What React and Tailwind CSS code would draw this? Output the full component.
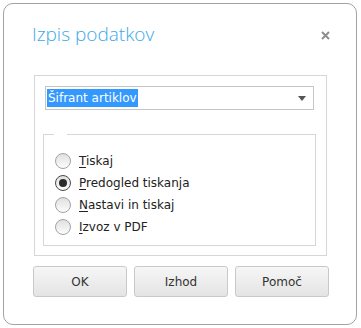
import React from "react";

function Radio({ label, checked }) {
  const first = label[0];
  const rest = label.slice(1);
  return (
    <div className="flex h-[22px] items-center">
      <div
        className={
          "flex h-[16px] w-[16px] items-center justify-center rounded-full border bg-gradient-to-b from-[#e0e0e0] to-[#fcfcfc] " +
          (checked ? "border-[#4a4a4a]" : "border-[#a3a3a3]")
        }
      >
        {checked && <div className="h-[8px] w-[8px] rounded-full bg-[#2b2b2b]" />}
      </div>
      <span className="ml-[8px] text-[12px] leading-none text-[#222]">
        <span className="underline underline-offset-2">{first}</span>
        {rest}
      </span>
    </div>
  );
}

function Btn({ children }) {
  return (
    <div className="flex h-[31px] w-[94px] items-center justify-center rounded-[3px] border border-[#c9c9c9] bg-gradient-to-b from-[#f6f6f6] to-[#e4e4e4] text-[12px] text-[#333]">
      {children}
    </div>
  );
}

export default function App() {
  return (
    <div
      className="h-[328px] w-[361px] bg-white pt-[3px] pl-[3px]"
      style={{ fontFamily: '"DejaVu Sans", sans-serif' }}
    >
      <div className="flex h-[322px] w-[354px] flex-col rounded-[10px] border border-[#a2a2a2]">
        <div className="mt-[18px] flex h-[24px] items-center justify-between pl-[28px] pr-[26px]">
          <span
            className="text-[19px] font-light leading-[24px] text-[#3aa9e8]"
            style={{ fontFamily: '"Open Sans", sans-serif' }}
          >
            Izpis podatkov
          </span>
          <svg width="9" height="9" viewBox="0 0 9 9" className="mt-[3px]">
            <path d="M1 1L8 8M8 1L1 8" stroke="#8c8c8c" strokeWidth="1.9" />
          </svg>
        </div>

        <div className="ml-[30px] mt-[29px] h-[181px] w-[293px] border border-[#d6d6d6] px-[10px] pt-[10px]">
          <div className="flex h-[24px] w-[269px] items-center justify-between border border-[#c6c6c6] bg-white pl-[1px] pr-[7px]">
            <span className="bg-[#3399ff] px-[1px] text-[12px] leading-[18px] text-white">
              Šifrant artiklov
            </span>
            <svg width="8" height="5" viewBox="0 0 8 5">
              <path d="M0 0H8L4 5Z" fill="#555" />
            </svg>
          </div>

          <div className="relative -ml-[2px] mt-[24px] h-[112px] w-[273px] border border-[#d6d6d6] pl-[11px] pt-[15px]">
            <span className="absolute -top-[1px] left-[10px] h-[1px] w-[13px] bg-white" />
            <Radio label="Tiskaj" />
            <Radio label="Predogled tiskanja" checked />
            <Radio label="Nastavi in tiskaj" />
            <Radio label="Izvoz v PDF" />
          </div>
        </div>

        <div className="ml-[29px] mt-[10px] flex gap-[7px]">
          <Btn>OK</Btn>
          <Btn>Izhod</Btn>
          <Btn>Pomoč</Btn>
        </div>
      </div>
    </div>
  );
}
